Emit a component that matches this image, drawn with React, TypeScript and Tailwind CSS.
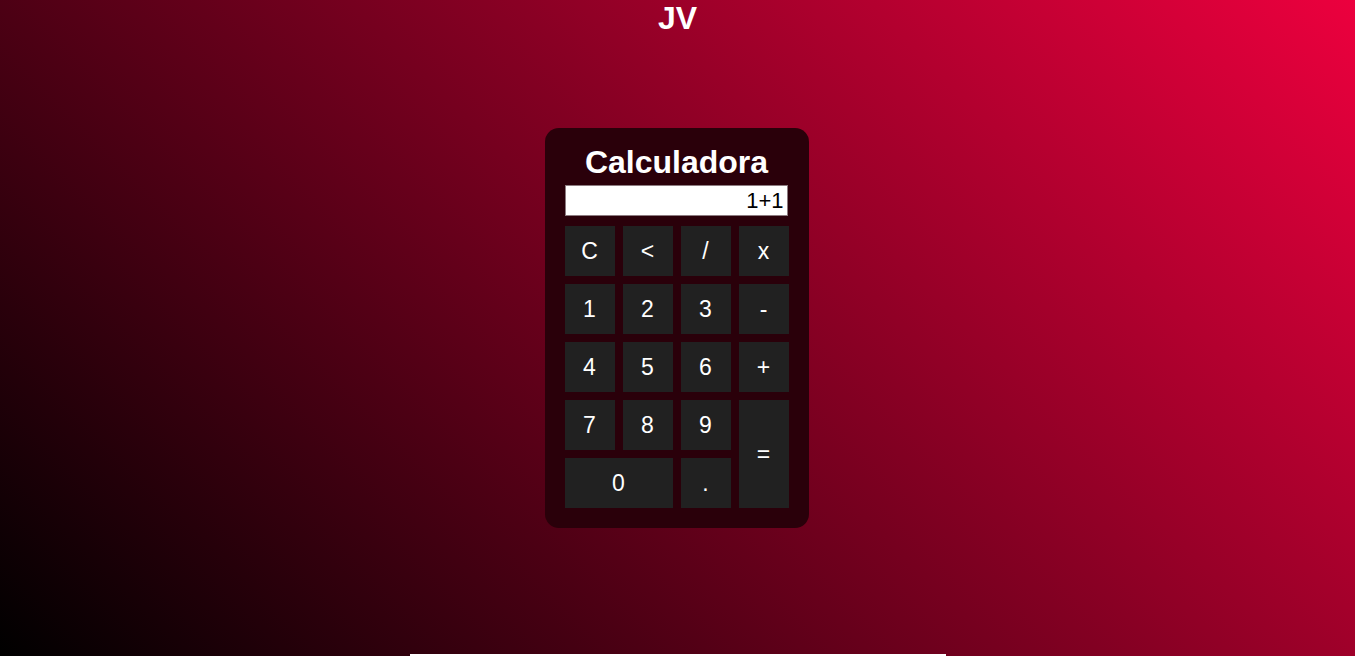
export default function App() {
  const keys: { label: string; cls?: string }[] = [
    { label: "C" },
    { label: "<" },
    { label: "/" },
    { label: "x" },
    { label: "1" },
    { label: "2" },
    { label: "3" },
    { label: "-" },
    { label: "4" },
    { label: "5" },
    { label: "6" },
    { label: "+" },
    { label: "7" },
    { label: "8" },
    { label: "9" },
    { label: "=", cls: "row-span-2" },
    { label: "0", cls: "col-span-2" },
    { label: "." },
  ];

  return (
    <div className="h-screen overflow-hidden flex flex-col items-center bg-[linear-gradient(45deg,#000000,#ec003e)] font-['Liberation_Sans',Arial,sans-serif] text-white">
      {/* Header */}
      <h1 className="h-[37px] text-[32px] font-bold leading-[37px]">JV</h1>

      {/* Calculator card */}
      <div className="mt-[91px] -translate-x-px w-[264px] rounded-[14px] bg-[#2a000a] px-5 pt-4 pb-5">
        <h2 className="text-center text-[32px] font-bold leading-[37px]">Calculadora</h2>
        <div className="mt-1 h-[31px] w-[223px] border border-[#8c7b80] bg-white pr-[3px] text-right text-[22px] leading-[29px] text-black">
          1+1
        </div>
        <div className="mt-[10px] grid grid-cols-[repeat(4,50px)] auto-rows-[50px] gap-2">
          {keys.map((k) => (
            <button
              key={k.label}
              className={`flex items-center justify-center bg-[#212121] text-[23px] text-white ${k.cls ?? ""}`}
            >
              {k.label}
            </button>
          ))}
        </div>
      </div>

      {/* bottom edge of next section */}
      <div className="mt-auto h-[2px] w-[536px] shrink-0 bg-white" />
    </div>
  );
}
